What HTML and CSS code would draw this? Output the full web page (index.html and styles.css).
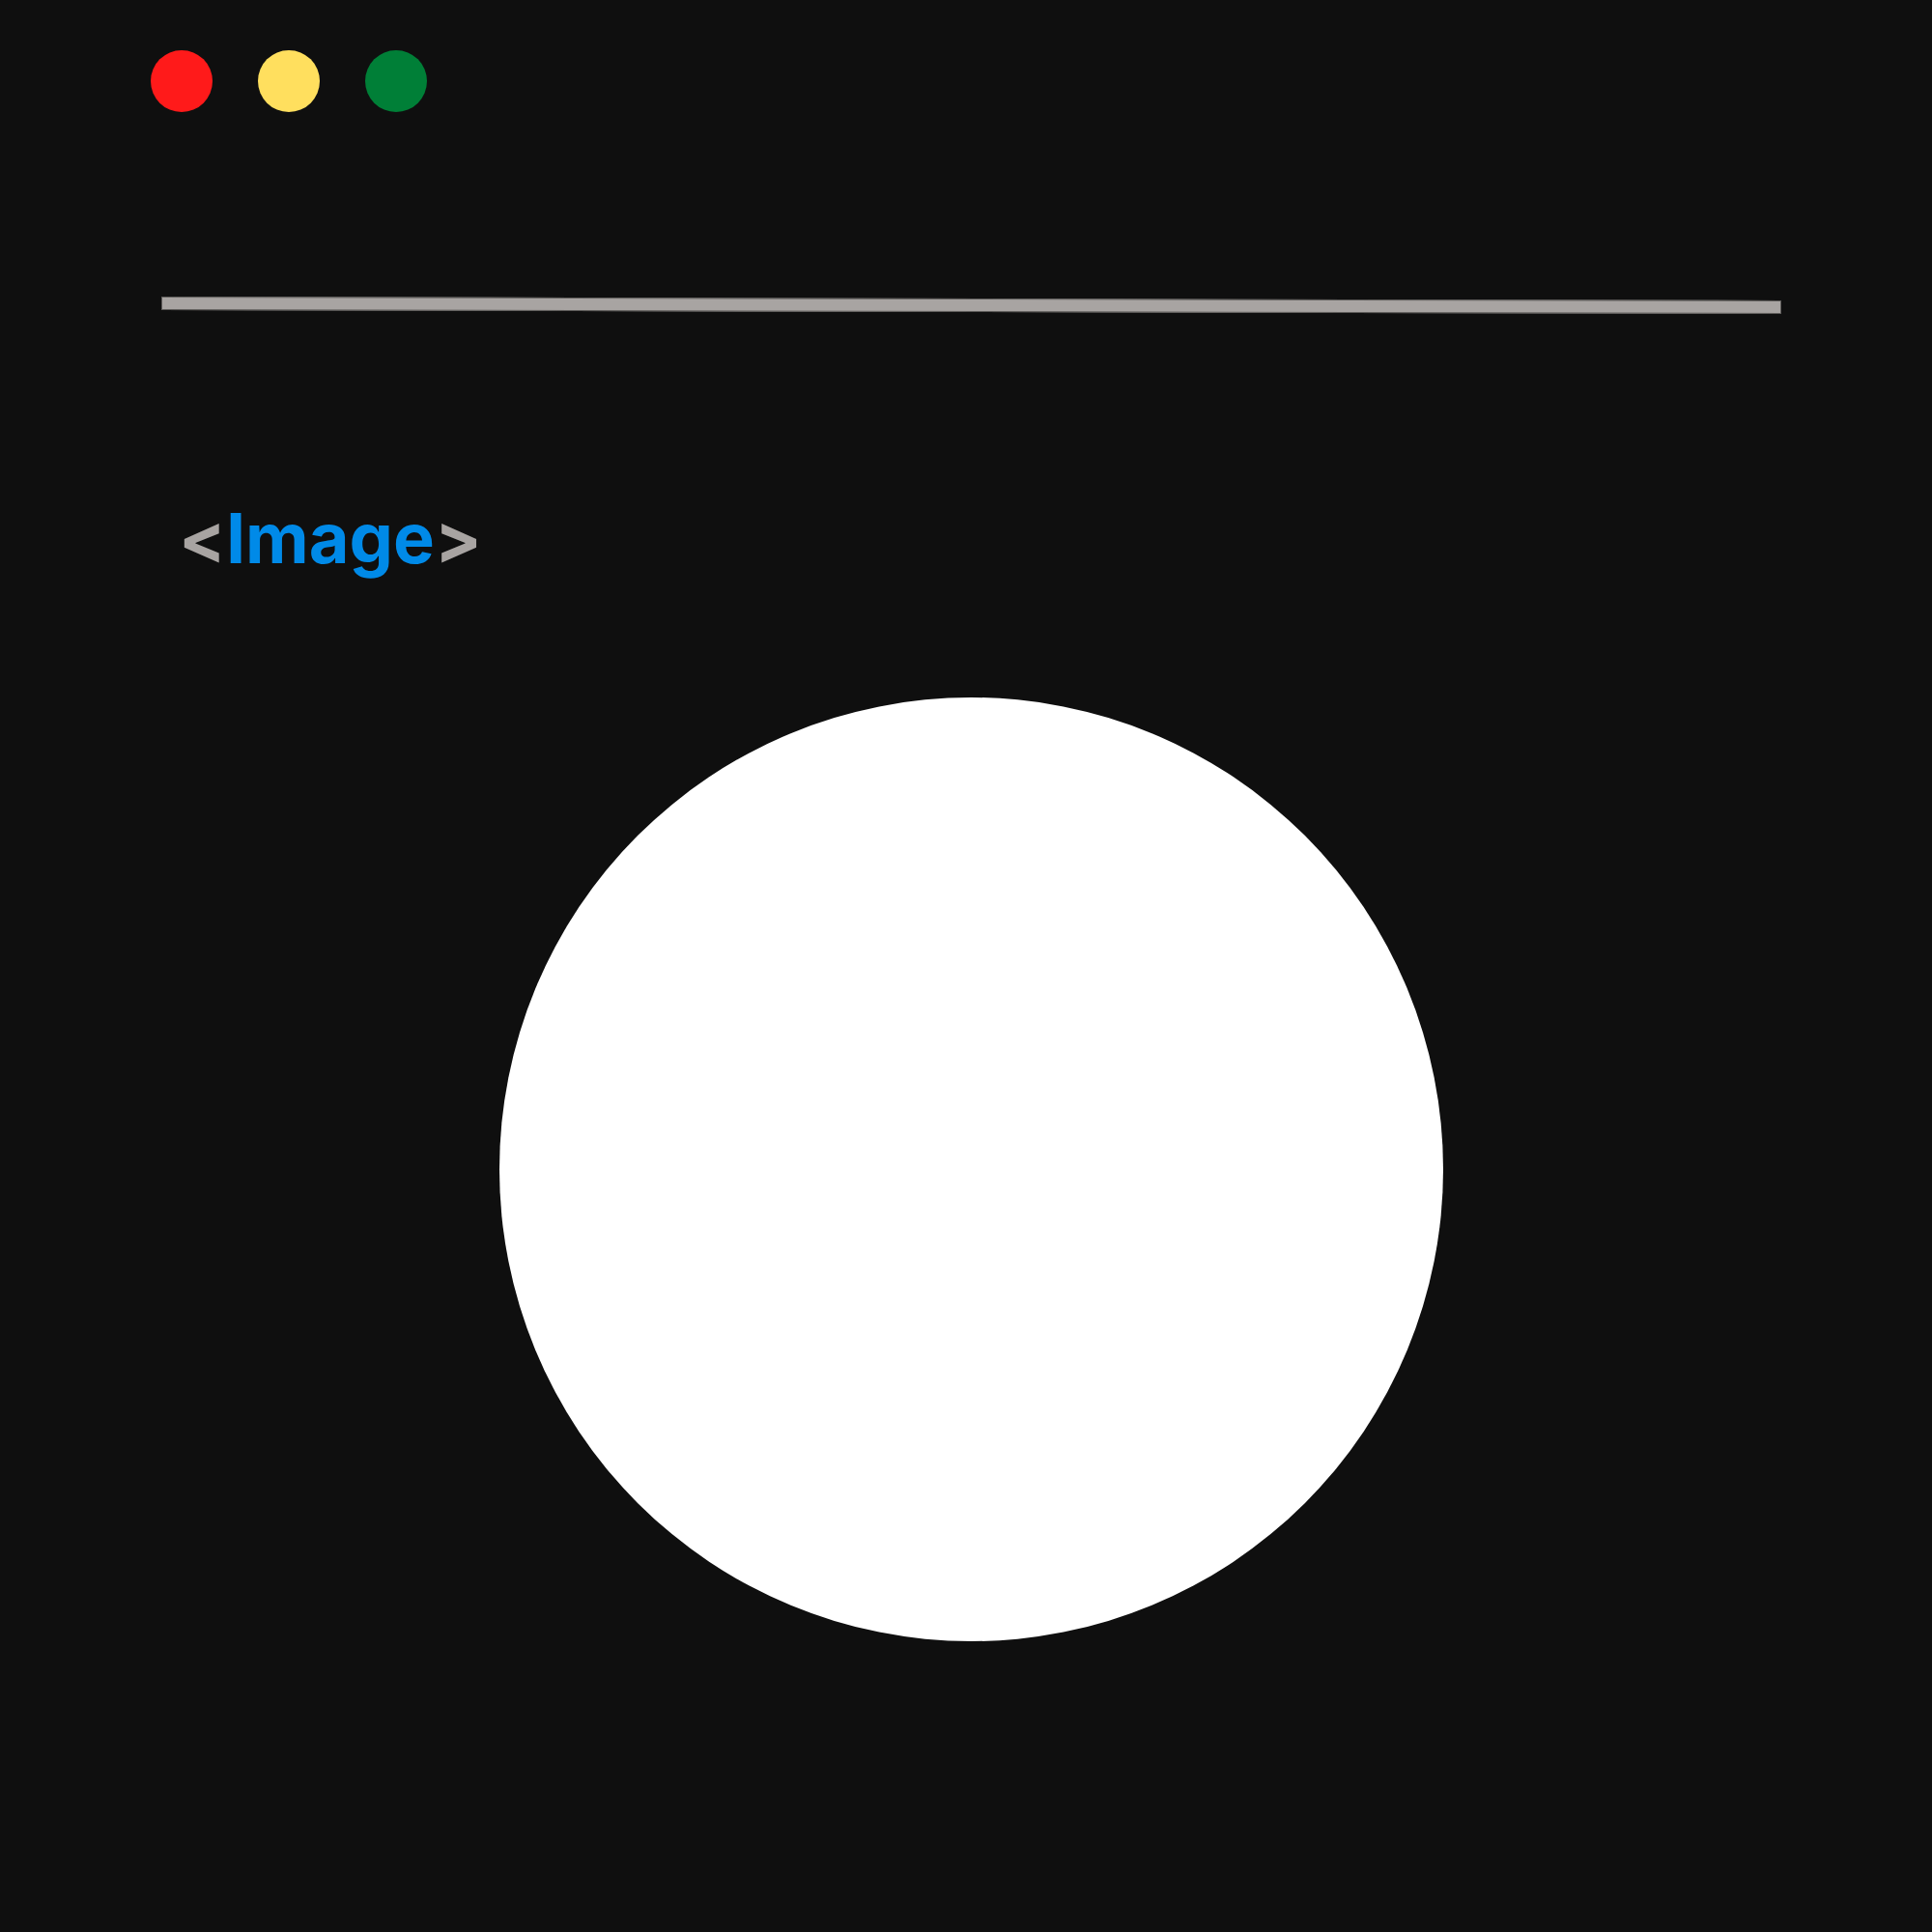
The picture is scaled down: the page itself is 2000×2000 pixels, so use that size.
FILE: index.html
```html
<!DOCTYPE html>
<html>
<head>
<meta charset="utf-8">
<link rel="stylesheet" href="styles.css">
</head>
<body>
<div class="dots">
  <span class="dot red"></span>
  <span class="dot yellow"></span>
  <span class="dot green"></span>
</div>
<div class="rule"></div>
<div class="title"><span class="br">&lt;</span>Image<span class="br">&gt;</span></div>
<div class="circle"></div>
</body>
</html>
```
FILE: styles.css
```css
html, body {
  margin: 0;
  padding: 0;
  background: #0f0f0f;
}
body {
  width: 2000px;
  height: 2000px;
  overflow: hidden;
}
.dots {
  display: flex;
  gap: 47px;
  padding: 52px 0 0 156px;
  height: 64px;
}
.dot {
  width: 64px;
  height: 64px;
  border-radius: 50%;
  display: block;
}
.red { background: #ff1a1a; }
.yellow { background: #ffdf5e; }
.green { background: #007f37; }
.rule {
  margin: 193px 0 0 167px;
  width: 1677px;
  height: 14px;
  box-sizing: border-box;
  background: #a8a4a2;
  border: 1px solid #5c5a58;
  transform: rotate(0.137deg);
}
.title {
  margin: 198px 0 0 185px;
  font-family: Inter, "Noto Sans", sans-serif;
  font-weight: 700;
  font-size: 72px;
  line-height: 72px;
  color: #008ae8;
  height: 72px;
  font-feature-settings: "calt" 0;
  font-variant-ligatures: no-contextual;
}
.br { color: #a8a4a2; }
.circle {
  margin: 129px 0 0 517px;
  width: 977px;
  height: 977px;
  border-radius: 50%;
  background: #ffffff;
}
```
